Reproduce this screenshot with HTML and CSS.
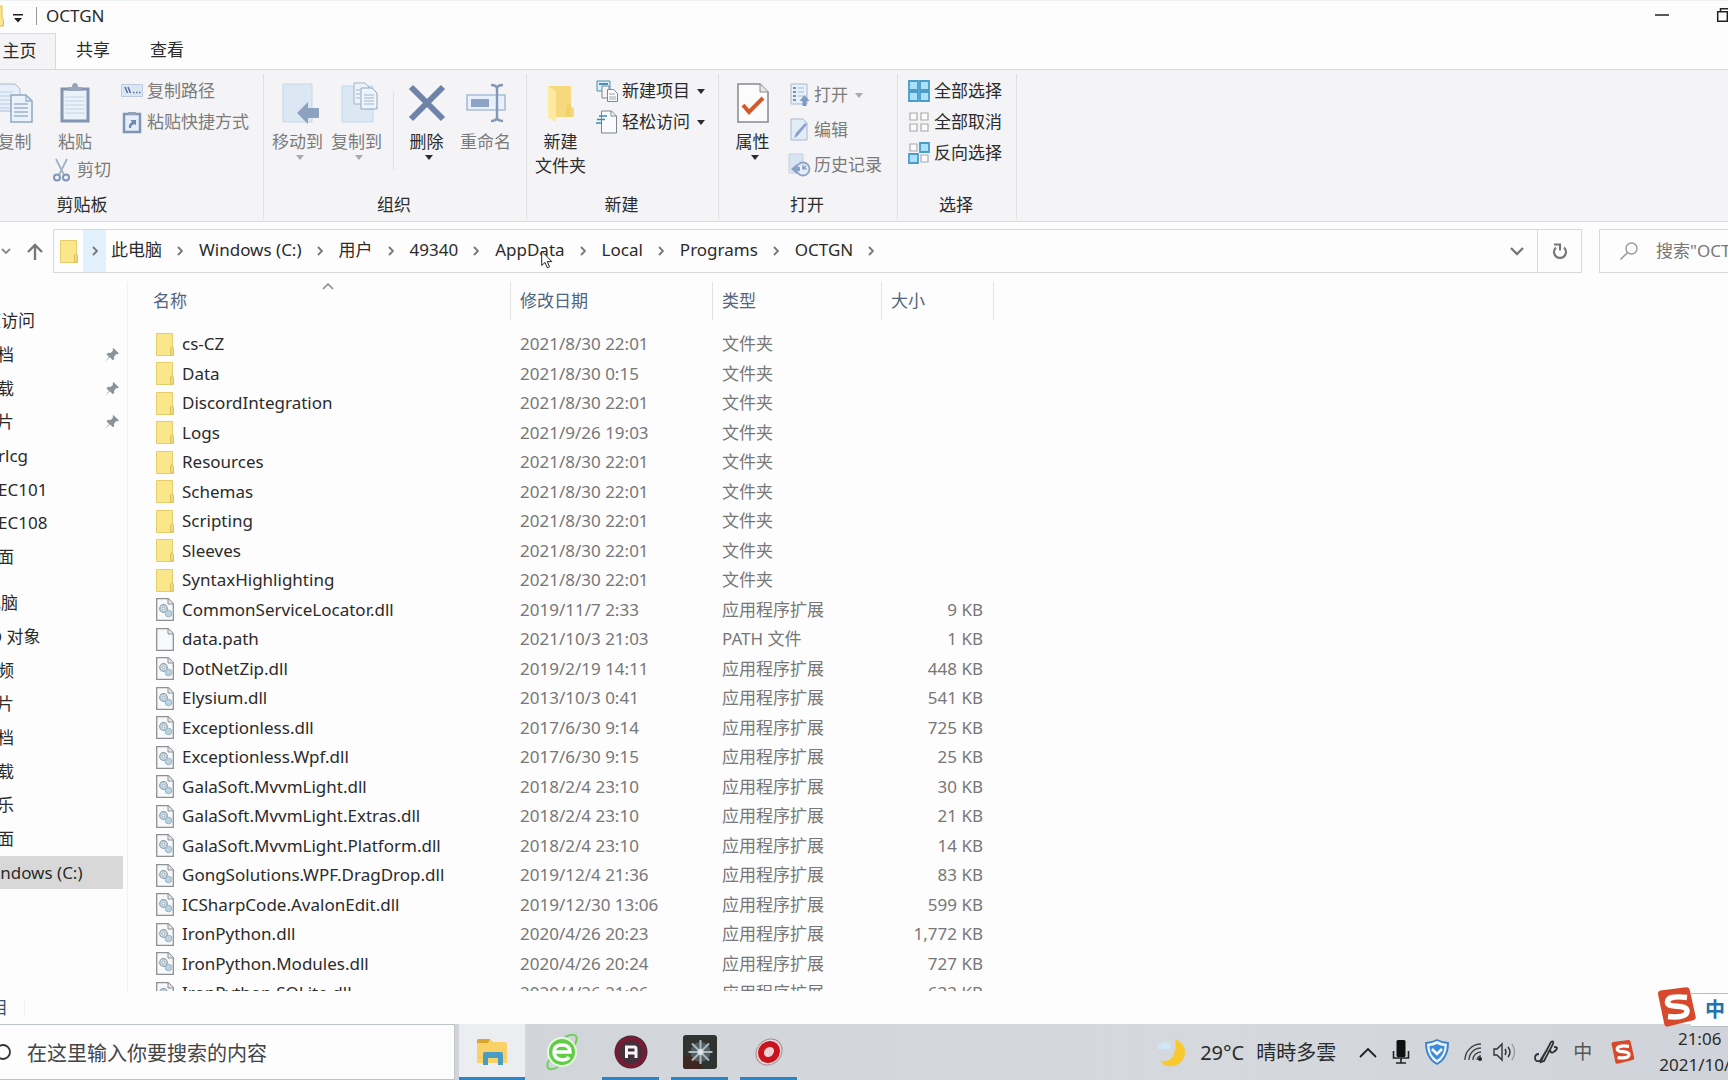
FILE: index.html
```html
<!DOCTYPE html>
<html lang="zh-CN">
<head>
<meta charset="utf-8">
<title>OCTGN</title>
<link rel="stylesheet" href="styles.css">
</head>
<body>
<svg class="sprite" aria-hidden="true">
  <symbol id="folder" viewBox="0 0 18 23"><path d="M.5.5h16v14l1 2v6H.5z" fill="#fae68b" stroke="#e6cd6c"/><path d="M14.500 22v-7l1.500-1.500 1.500 2V22z" fill="#f3d877" stroke="#dfc260"/></symbol>
  <symbol id="file" viewBox="0 0 18 23"><path d="M.7.7h11.600l5 5v16.600H.7z" fill="#f8f9fa" stroke="#8d9095" stroke-width="1.300"/><path d="M12 .7v5.300h5.300" fill="#e7e9eb" stroke="#8d9095"/></symbol>
  <symbol id="dll" viewBox="0 0 18 23"><use href="#file"/><circle cx="7.500" cy="10.500" r="3.800" fill="#d5e0e8" stroke="#8b9eac" stroke-width="1.200"/><circle cx="7.500" cy="10.500" r="1.500" fill="#f8f9fa" stroke="#8b9eac" stroke-width=".8"/><circle cx="12.500" cy="15.500" r="3.300" fill="#b9d3e2" stroke="#9ab4c5"/></symbol>
  <symbol id="pin" viewBox="0 0 14 14"><path d="M8.500 0L14 5.500l-1.500.8-1-.3-2.400 2.400.1 2.500-1.400 1.300-3-3L0 14l4-5-2.500-2.800L3 4.800l2.600.1L8 2.500 7.700 1z" fill="#8a949b"/></symbol>
  <symbol id="next" viewBox="0 0 6 10"><path d="M1 1l4 4-4 4" fill="none" stroke="#777" stroke-width="1.800"/></symbol>
  <symbol id="down" viewBox="0 0 8 5"><path d="M0 0h8L4 5z" fill="currentColor"/></symbol>
  <symbol id="sogou" viewBox="0 0 40 40"><path d="M1 7q-.5-3 2.500-3.500L29 .2q3-.4 3.700 2.500l6 27q.6 3-2.500 3.600L11 39.500q-3 .7-3.700-2.200z" fill="#d8492c"/><path d="M30 10.500Q10 8 10.500 15.500c.5 6.500 19.500 1 19.500 8.500 0 6-10 6.500-19 5.500" fill="none" stroke="#fff" stroke-width="5.500"/></symbol>
</svg>

<div class="window">
  <header class="titlebar">
    <svg class="app-icon" width="4" height="22" viewBox="0 0 4 22"><path d="M0 1h2v12l1.500 2v6H0" fill="#fae68b" stroke="#e0bf4f"/></svg>
    <button class="quick" aria-label="自定义快速访问工具栏"><svg width="10" height="9" viewBox="0 0 10 9"><path d="M0 0h10v1.600H0zM1 4h8L5 8.500z" fill="#222"/></svg></button>
    <h1>OCTGN</h1>
    <div class="window-buttons">
      <button aria-label="最小化"><svg width="14" height="14" viewBox="0 0 14 14"><path d="M0 7h14" stroke="#222" stroke-width="1.500"/></svg></button>
      <button aria-label="向下还原"><svg width="14" height="14" viewBox="0 0 14 14"><path d="M.7 3.700h9.600v9.600H.7zM3.500 3.500V.8h9.800v9.700h-3" fill="none" stroke="#222" stroke-width="1.500"/></svg></button>
    </div>
  </header>

  <nav class="tabs">
    <button class="tab active">主页</button>
    <button class="tab">共享</button>
    <button class="tab">查看</button>
  </nav>

  <div class="ribbon">
    <section class="group clipboard">
      <div class="tools">
        <button class="big dim copy"><svg width="40" height="40" viewBox="0 0 40 40"><path d="M1 1h19l5 5v22H1z" fill="#e7eff8" stroke="#a9bace"/><path d="M4 9h14M4 13h14M4 17h14M4 21h14M4 25h14" stroke="#b8cce2"/><path d="M16 12h15l6 6v21H16z" fill="#e9f1fa" stroke="#8fa6c1" stroke-width="1.500"/><path d="M31 12v6h6M19 21h14M19 25h14M19 29h14M19 33h14" fill="none" stroke="#9eb2cc" stroke-width="1.300"/></svg><span>复制</span></button>
        <div class="paste-stack">
          <button class="big dim"><svg width="30" height="40" viewBox="0 0 30 40"><path d="M2 6h26v32H2z" fill="#e9f1f9" stroke="#8194b2" stroke-width="3"/><path d="M8 8V4h4q0-4 3-4t3 4h4v4z" fill="#9aa6b8"/><path d="M5 14h20M5 18h20M5 22h20M5 26h20M5 30h20" stroke="#c3d4e7"/></svg><span>粘贴</span></button>
          <button class="small dim cut"><svg width="17" height="23" viewBox="0 0 17 23"><path d="M3 0l7.500 15M14 0L6.500 15" stroke="#9fb1ca" stroke-width="1.800"/><circle cx="4" cy="18.500" r="3" fill="none" stroke="#7d95bb" stroke-width="2"/><circle cx="13" cy="18.500" r="3" fill="none" stroke="#7d95bb" stroke-width="2"/></svg><span>剪切</span></button>
        </div>
        <div class="column">
          <button class="small dim"><svg width="22" height="22" viewBox="0 0 22 22"><path d="M.5 4.500h21v12H.5z" fill="#dbe6f3" stroke="#bccbe0"/><path d="M4 7l2.500 6M7 7l2.500 6M12 12.500h1.500M15 12.500h1.500M18 12.500h1.500" stroke="#58719a" stroke-width="1.500"/></svg><span>复制路径</span></button>
          <button class="small dim"><svg width="22" height="22" viewBox="0 0 22 22"><path d="M3 3h16v18H3z" fill="#e4eef9" stroke="#7f95b8" stroke-width="2.500"/><path d="M7 4V1h8v3z" fill="#93a3ba"/><path d="M8 17q-1-4 3-6L9.500 9H15v5.500L13.500 13Q10 14 10 17z" fill="#6c89b6"/></svg><span>粘贴快捷方式</span></button>
        </div>
      </div>
      <h2>剪贴板</h2>
    </section>

    <section class="group organize">
      <div class="tools">
        <button class="big dim"><svg width="38" height="40" viewBox="-3 0 38 40"><path d="M1 1h29v38H1z" fill="#dbe7f3" stroke="#c6d7e8"/><path d="M15 30L26 19v6h11v10H26v6z" fill="#8da1c0"/></svg><span>移动到</span><svg class="caret" width="8" height="5"><use href="#down"/></svg></button>
        <button class="big dim"><svg width="38" height="40" viewBox="-3 0 38 40"><path d="M1 3h31v36H1z" fill="#dbe7f3" stroke="#c6d7e8"/><path d="M13 0h11l4 4v17H13z" fill="#eaf2fa" stroke="#9fb3cc"/><path d="M20 5h11l5 5v16H20z" fill="#eef4fb" stroke="#8ea4c1"/><path d="M23 12h10M23 15h10M23 18h10M23 21h10M15 7h4M15 11h4M15 15h4" stroke="#9fb3cc"/></svg><span>复制到</span><svg class="caret" width="8" height="5"><use href="#down"/></svg></button>
        <span class="rule"></span>
        <button class="big delete"><svg width="38" height="40" viewBox="0 0 38 40"><path d="M3 4l32 32M35 4L3 36" stroke="#6f83a8" stroke-width="6"/></svg><span>删除</span><svg class="caret" width="8" height="5"><use href="#down"/></svg></button>
        <button class="big dim"><svg width="40" height="40" viewBox="0 0 40 40"><path d="M1 12h38v15H1z" fill="#e8f1fb" stroke="#a7bcd7" stroke-width="1.600"/><path d="M5 16h18v8H5z" fill="#8da4c8"/><path d="M25 2q6 0 6 4v28q0 4-6 4M37 2q-6 0-6 4v28q0 4 6 4" fill="none" stroke="#8497b5" stroke-width="2.400"/></svg><span>重命名</span></button>
      </div>
      <h2>组织</h2>
    </section>

    <section class="group create">
      <div class="tools">
        <button class="big"><svg width="30" height="40" viewBox="0 0 30 40"><path d="M2 3h23v20l3 3v8H8z" fill="#f6d97c"/><path d="M2 3l8 5v31l-8-4z" fill="#fde9a2"/><path d="M20 23l5-3v14h-5z" fill="#eecb62" opacity=".6"/></svg><span>新建<br>文件夹</span></button>
        <div class="column">
          <button class="small"><svg width="22" height="22" viewBox="0 0 22 22"><path d="M1 1h13v10H1z" fill="#dceff8" stroke="#4c8fae"/><path d="M3 4h9" stroke="#4c8fae" stroke-width="2"/><path d="M6 6h7v12H6z" fill="#f4f5f7" stroke="#7b8794"/><path d="M11.500 9.500h6l4 4v8h-10z" fill="#fff" stroke="#7b8794"/><path d="M13 14h6M13 17h7M13 19h7" stroke="#93a7bc"/></svg><span>新建项目</span><svg class="caret" width="8" height="5"><use href="#down"/></svg></button>
          <button class="small"><svg width="22" height="24" viewBox="0 0 22 24"><path d="M5.500 1h10l5 5v17h-15z" fill="#fafbfc" stroke="#7c848e"/><path d="M15 1v5h5" fill="none" stroke="#7c848e"/><path d="M3 6h8M1 9.500h8M0 13h6" stroke="#3e86bd" stroke-width="1.600"/></svg><span>轻松访问</span><svg class="caret" width="8" height="5"><use href="#down"/></svg></button>
        </div>
      </div>
      <h2>新建</h2>
    </section>

    <section class="group open">
      <div class="tools">
        <button class="big"><svg width="32" height="40" viewBox="0 0 32 40"><path d="M1 1h22l8 8v30H1z" fill="#fcfcfd" stroke="#85898e" stroke-width="1.500"/><path d="M23 1v8h8" fill="#e5e7e9" stroke="#85898e"/><path d="M6 22l6 7L26 15" fill="none" stroke="#d4592b" stroke-width="4"/></svg><span>属性</span><svg class="caret" width="8" height="5"><use href="#down"/></svg></button>
        <div class="column spaced">
          <button class="small dim"><svg width="22" height="24" viewBox="0 0 22 24"><path d="M3 1h16v20H3z" fill="#e8f0fa" stroke="#a6b8d1"/><path d="M5 5h3M5 9h3M5 13h3M5 17h3" stroke="#7391bd" stroke-width="2"/><path d="M10 5h6M10 9h6M10 13h5" stroke="#a6b8d1"/><path d="M16.500 12l5 6h-3v5h-4v-5h-3z" fill="#7e99c1"/></svg><span>打开</span><svg class="caret" width="8" height="5"><use href="#down"/></svg></button>
          <button class="small dim"><svg width="22" height="24" viewBox="0 0 22 24"><path d="M3 1h12l4 4v17H3z" fill="#e3edf8" stroke="#a6b8d1"/><path d="M6 20l2-5L17 5l2 1.500L9.500 18z" fill="#8ba3c6"/></svg><span>编辑</span></button>
          <button class="small dim"><svg width="22" height="24" viewBox="0 0 22 24"><path d="M1 1h14v19H1z" fill="#d8e4f1" stroke="#c1d0e2"/><circle cx="15" cy="16" r="6.500" fill="#e5edf8" stroke="#91a5c4" stroke-width="1.800"/><path d="M15 16l3-3M15 12v4h4" fill="none" stroke="#7a91b5" stroke-width="1.200"/><path d="M3 16l6-5v3h3v4H9v3z" fill="#8aa0c4"/></svg><span>历史记录</span></button>
        </div>
      </div>
      <h2>打开</h2>
    </section>

    <section class="group select">
      <div class="tools">
        <div class="column">
          <button class="small"><svg width="22" height="22" viewBox="0 0 22 22"><path d="M1 1h9v9H1zM12 1h9v9h-9zM1 12h9v9H1zM12 12h9v9h-9z" fill="#a9e0fa" stroke="#4b9cc7" stroke-width="1.800"/></svg><span>全部选择</span></button>
          <button class="small"><svg width="22" height="22" viewBox="0 0 22 22"><path d="M2 2h7v7H2zM13 2h7v7h-7zM2 13h7v7H2zM13 13h7v7h-7z" fill="#fbfbfb" stroke="#aaa" stroke-width="1.200"/></svg><span>全部取消</span></button>
          <button class="small"><svg width="22" height="22" viewBox="0 0 22 22"><path d="M2 2h7v7H2zM13 13h7v7h-7z" fill="#fbfbfb" stroke="#aaa" stroke-width="1.200"/><path d="M12 1h9v9h-9zM1 12h9v9H1z" fill="#a9e0fa" stroke="#4b9cc7" stroke-width="1.800"/></svg><span>反向选择</span></button>
        </div>
      </div>
      <h2>选择</h2>
    </section>
  </div>

  <div class="navbar">
    <button class="recent" aria-label="最近浏览的位置"><svg width="8" height="6" viewBox="0 0 8 6"><path d="M0 1l4 4 4-4" fill="none" stroke="#888" stroke-width="1.800"/></svg></button>
    <button class="up" aria-label="向上"><svg width="16" height="17" viewBox="0 0 16 17"><path d="M8 17V2M1 9l7-7 7 7" fill="none" stroke="#777" stroke-width="2.400"/></svg></button>
    <div class="address">
      <svg class="address-icon" width="18" height="23"><use href="#folder"/></svg>
      <button class="step hot" aria-label="展开"><svg width="6" height="10"><use href="#next"/></svg></button>
      <a href="#">此电脑</a><svg class="sep" width="6" height="10"><use href="#next"/></svg>
      <a href="#">Windows (C:)</a><svg class="sep" width="6" height="10"><use href="#next"/></svg>
      <a href="#">用户</a><svg class="sep" width="6" height="10"><use href="#next"/></svg>
      <a href="#">49340</a><svg class="sep" width="6" height="10"><use href="#next"/></svg>
      <a href="#" class="pointed">AppData<svg class="cursor" width="12" height="19" viewBox="0 0 12 19"><path d="M.7 1v14.500l3.300-3 2.300 5.300 2.200-1-2.200-5.200h4.500z" fill="#fff" stroke="#222"/></svg></a><svg class="sep" width="6" height="10"><use href="#next"/></svg>
      <a href="#">Local</a><svg class="sep" width="6" height="10"><use href="#next"/></svg>
      <a href="#">Programs</a><svg class="sep" width="6" height="10"><use href="#next"/></svg>
      <a href="#">OCTGN</a><svg class="sep" width="6" height="10"><use href="#next"/></svg>
      <button class="history" aria-label="以前的位置"><svg width="14" height="9" viewBox="0 0 14 9"><path d="M1 1l6 6 6-6" fill="none" stroke="#777" stroke-width="2.400"/></svg></button>
      <button class="refresh" aria-label="刷新"><svg width="16" height="17" viewBox="0 0 16 17"><path d="M12 4.500A6 6 0 1 1 4 4.500" fill="none" stroke="#777" stroke-width="2.200"/><path d="M2 1.500h6v6" fill="none" stroke="#777" stroke-width="2.200"/></svg></button>
    </div>
    <label class="search"><svg width="18" height="18" viewBox="0 0 18 18"><circle cx="11.500" cy="6.500" r="5.500" fill="none" stroke="#999" stroke-width="1.400"/><path d="M7.500 10.500L.5 17.500" stroke="#999" stroke-width="1.600"/></svg><input type="text" placeholder="搜索&quot;OCTGN&quot;" aria-label="搜索"></label>
  </div>

  <main class="content">
    <aside class="sidebar">
      <ul>
        <li class="root">快速访问</li>
        <li>文档<svg class="pin" width="14" height="14"><use href="#pin"/></svg></li>
        <li>下载<svg class="pin" width="14" height="14"><use href="#pin"/></svg></li>
        <li>图片<svg class="pin" width="14" height="14"><use href="#pin"/></svg></li>
        <li class="latin">rlcg</li>
        <li class="latin">EC101</li>
        <li class="latin">EC108</li>
        <li>桌面</li>
      </ul>
      <ul>
        <li class="root">此电脑</li>
        <li>3D 对象</li>
        <li>视频</li>
        <li>图片</li>
        <li>文档</li>
        <li>下载</li>
        <li>音乐</li>
        <li>桌面</li>
        <li class="selected">Windows (C:)</li>
      </ul>
    </aside>
    <div class="files">
      <table>
        <colgroup><col class="c-name"><col class="c-date"><col class="c-type"><col class="c-size"></colgroup>
        <thead><tr>
          <th><button class="sorted">名称<svg width="12" height="7" viewBox="0 0 12 7"><path d="M1 6l5-5 5 5" fill="none" stroke="#888" stroke-width="1.500"/></svg></button></th>
          <th><button>修改日期</button></th>
          <th><button>类型</button></th>
          <th><button>大小</button></th>
        </tr></thead>
        <tbody>
          <tr><td><svg><use href="#folder"/></svg>cs-CZ</td><td>2021/8/30 22:01</td><td>文件夹</td><td></td></tr>
          <tr><td><svg><use href="#folder"/></svg>Data</td><td>2021/8/30 0:15</td><td>文件夹</td><td></td></tr>
          <tr><td><svg><use href="#folder"/></svg>DiscordIntegration</td><td>2021/8/30 22:01</td><td>文件夹</td><td></td></tr>
          <tr><td><svg><use href="#folder"/></svg>Logs</td><td>2021/9/26 19:03</td><td>文件夹</td><td></td></tr>
          <tr><td><svg><use href="#folder"/></svg>Resources</td><td>2021/8/30 22:01</td><td>文件夹</td><td></td></tr>
          <tr><td><svg><use href="#folder"/></svg>Schemas</td><td>2021/8/30 22:01</td><td>文件夹</td><td></td></tr>
          <tr><td><svg><use href="#folder"/></svg>Scripting</td><td>2021/8/30 22:01</td><td>文件夹</td><td></td></tr>
          <tr><td><svg><use href="#folder"/></svg>Sleeves</td><td>2021/8/30 22:01</td><td>文件夹</td><td></td></tr>
          <tr><td><svg><use href="#folder"/></svg>SyntaxHighlighting</td><td>2021/8/30 22:01</td><td>文件夹</td><td></td></tr>
          <tr><td><svg><use href="#dll"/></svg>CommonServiceLocator.dll</td><td>2019/11/7 2:33</td><td>应用程序扩展</td><td>9 KB</td></tr>
          <tr><td><svg><use href="#file"/></svg>data.path</td><td>2021/10/3 21:03</td><td>PATH 文件</td><td>1 KB</td></tr>
          <tr><td><svg><use href="#dll"/></svg>DotNetZip.dll</td><td>2019/2/19 14:11</td><td>应用程序扩展</td><td>448 KB</td></tr>
          <tr><td><svg><use href="#dll"/></svg>Elysium.dll</td><td>2013/10/3 0:41</td><td>应用程序扩展</td><td>541 KB</td></tr>
          <tr><td><svg><use href="#dll"/></svg>Exceptionless.dll</td><td>2017/6/30 9:14</td><td>应用程序扩展</td><td>725 KB</td></tr>
          <tr><td><svg><use href="#dll"/></svg>Exceptionless.Wpf.dll</td><td>2017/6/30 9:15</td><td>应用程序扩展</td><td>25 KB</td></tr>
          <tr><td><svg><use href="#dll"/></svg>GalaSoft.MvvmLight.dll</td><td>2018/2/4 23:10</td><td>应用程序扩展</td><td>30 KB</td></tr>
          <tr><td><svg><use href="#dll"/></svg>GalaSoft.MvvmLight.Extras.dll</td><td>2018/2/4 23:10</td><td>应用程序扩展</td><td>21 KB</td></tr>
          <tr><td><svg><use href="#dll"/></svg>GalaSoft.MvvmLight.Platform.dll</td><td>2018/2/4 23:10</td><td>应用程序扩展</td><td>14 KB</td></tr>
          <tr><td><svg><use href="#dll"/></svg>GongSolutions.WPF.DragDrop.dll</td><td>2019/12/4 21:36</td><td>应用程序扩展</td><td>83 KB</td></tr>
          <tr><td><svg><use href="#dll"/></svg>ICSharpCode.AvalonEdit.dll</td><td>2019/12/30 13:06</td><td>应用程序扩展</td><td>599 KB</td></tr>
          <tr><td><svg><use href="#dll"/></svg>IronPython.dll</td><td>2020/4/26 20:23</td><td>应用程序扩展</td><td>1,772 KB</td></tr>
          <tr><td><svg><use href="#dll"/></svg>IronPython.Modules.dll</td><td>2020/4/26 20:24</td><td>应用程序扩展</td><td>727 KB</td></tr>
          <tr><td><svg><use href="#dll"/></svg>IronPython.SQLite.dll</td><td>2020/4/26 21:06</td><td>应用程序扩展</td><td>633 KB</td></tr>
        </tbody>
      </table>
    </div>
  </main>

  <footer class="status"><span>目</span></footer>
</div>

<div class="taskbar">
  <label class="task-search"><svg width="12" height="18" viewBox="0 0 12 18"><circle cx="3" cy="7" r="7" fill="none" stroke="#333" stroke-width="1.800"/></svg><input type="text" placeholder="在这里输入你要搜索的内容" aria-label="搜索"></label>
  <button class="app current" aria-label="文件资源管理器"><svg width="32" height="28" viewBox="0 0 32 28"><path d="M1 3q0-2 2-2h11l3 3h12q2 0 2 2v19H1z" fill="#f8d266"/><path d="M1 3q0-2 2-2h11l-2 4H1z" fill="#d8a52f"/><path d="M7 16q0-2 2-2h16q2 0 2 2v11h-5v-7H12v7H7z" fill="#4a9cc4"/></svg></button>
  <button class="app idle" aria-label="浏览器"><svg width="34" height="36" viewBox="0 0 34 36"><path d="M20 3Q28-1 31 2q2 4-2 10M13 33Q6 37 3 34q-2-4 2-9" fill="none" stroke="#6fd15a" stroke-width="2"/><circle cx="17" cy="18" r="14" fill="#5fce45" stroke="#e6f8df" stroke-width="2"/><path d="M9 18h16q0-7-8-7t-8 7 8 8q5 0 7-3" fill="none" stroke="#fff" stroke-width="3.500"/></svg></button>
  <button class="app open-app" aria-label="ArkhamDB"><svg width="34" height="34" viewBox="0 0 34 34"><circle cx="17" cy="17" r="16.500" fill="#3f2f38"/><circle cx="17" cy="17" r="13.500" fill="#43303a" stroke="#7c1a34" stroke-width="4"/><path d="M12.500 23V12h8q1.500 0 1.500 2v9M12 18h10" fill="none" stroke="#f4f4f4" stroke-width="3"/></svg></button>
  <button class="app open-app" aria-label="游戏"><svg width="34" height="34" viewBox="0 0 34 34"><rect width="34" height="34" rx="3" fill="#30332f"/><path d="M0 22l17-2 2 14H3q-3 0-3-3z" fill="#3f2721"/><circle cx="17.500" cy="17" r="10" fill="#71828a" opacity=".55"/><path d="M17.500 5v24M5.500 17h24M9 8.500l17 17M26 8.500l-17 17" stroke="#a9bac2" stroke-width="2"/><circle cx="17.500" cy="17" r="3" fill="#d8e2e7"/></svg></button>
  <button class="app open-app" aria-label="录屏"><svg width="30" height="30" viewBox="0 0 30 30"><ellipse cx="15" cy="15" rx="14" ry="12" transform="rotate(-45 15 15)" fill="#e4d9dc" stroke="#a9898e"/><ellipse cx="15" cy="15" rx="8.500" ry="7.500" transform="rotate(-45 15 15)" fill="#ead3d7" stroke="#c9141d" stroke-width="6"/></svg></button>

  <div class="tray">
    <button class="weather"><svg width="30" height="30" viewBox="0 0 30 30"><path d="M19 1c10 4 13 14 7 22-6 7-17 7-22 0 6 1 12-1 14-7 2-5 2-10 1-15z" fill="#f9c92c"/><path d="M2 11q-2-4 3-5 3-5 7-1 4 0 2 6z" fill="#cfe8f5"/></svg><span class="temp">29°C</span><span class="sky">晴時多雲</span></button>
    <button aria-label="显示隐藏的图标"><svg width="18" height="11" viewBox="0 0 18 11"><path d="M1 10l8-8 8 8" fill="none" stroke="#222" stroke-width="1.800"/></svg></button>
    <button aria-label="麦克风"><svg width="18" height="24" viewBox="0 0 18 24"><rect x="4.500" y="0" width="9" height="17" rx="1.500" fill="#111"/><path d="M1.500 11v7h15v-7M9 18v5M4 23h10" fill="none" stroke="#222" stroke-width="1.600"/></svg></button>
    <button aria-label="安全"><svg width="24" height="26" viewBox="0 0 24 26"><path d="M12 1q6 3 11 3 0 15-11 21Q1 19 1 4q5 0 11-3z" fill="#e8f2fc" stroke="#3a80cc" stroke-width="1.800"/><path d="M4.500 7q4 0 7.500-2 3.500 2 7.500 2 0 9-7.500 14Q4.500 16 4.500 7z" fill="#3d8bdb"/><path d="M7 10l5 5 5-5" fill="none" stroke="#fff" stroke-width="2.500"/></svg></button>
    <button aria-label="网络"><svg width="18" height="18" viewBox="0 0 18 18"><path d="M1 17A16 16 0 0 1 17 1M5 17A12 12 0 0 1 17 5M9 17a8 8 0 0 1 8-8M13 17a4 4 0 0 1 4-4" fill="none" stroke="#444" stroke-width="1.400"/><circle cx="16" cy="16" r="2" fill="#222"/></svg></button>
    <button class="volume" aria-label="音量"><svg width="24" height="18" viewBox="0 0 24 18"><path d="M1 6h3l5-5v16l-5-5H1z" fill="none" stroke="#333" stroke-width="1.400"/><path d="M12 6q2 3 0 6M15 4q4 5 0 10" fill="none" stroke="#333" stroke-width="1.500"/><path d="M19 1q5 8 0 16" fill="none" stroke="#999" stroke-width="1.300"/></svg></button>
    <button aria-label="墨迹"><svg width="24" height="24" viewBox="0 0 24 24"><path d="M5 14q-4 0-4 4t5 3l8-13M9 17l8-15q3-2 2 2l-9 17-3 1zM14 12q2-2 3 0t5-2q3-3-2-3" fill="none" stroke="#333" stroke-width="1.800"/></svg></button>
    <button class="ime-mode">中</button>
    <button aria-label="输入法"><svg width="24" height="26"><use href="#sogou"/></svg></button>
    <div class="clock"><time>21:06</time><time>2021/10/3</time></div>
  </div>
</div>

<div class="ime"><svg width="40" height="40"><use href="#sogou"/></svg><button>中</button></div>
</body>
</html>
```
FILE: styles.css
```css
* { box-sizing: border-box; }

html, body { height: 100%; }

body {
  margin: 0;
  display: flex;
  flex-direction: column;
  overflow: hidden;
  background: #fdfdfd;
  color: #2b2b2b;
  font: 17px/24px "Noto Sans", "Noto Sans CJK SC", sans-serif;
}

button {
  margin: 0;
  padding: 0;
  border: 0;
  background: none;
  color: inherit;
  font: inherit;
}

input {
  min-width: 0;
  padding: 0;
  border: 0;
  outline: 0;
  background: none;
  color: inherit;
  font: inherit;
}

ul { margin: 0; padding: 0; list-style: none; }
h1, h2 { margin: 0; font-size: inherit; font-weight: 400; }
a { color: inherit; text-decoration: none; }
svg { display: block; flex: none; overflow: visible; }
.sprite { position: absolute; width: 0; height: 0; }

.window {
  flex: 1;
  min-height: 0;
  display: flex;
  flex-direction: column;
}

/* Title bar */
.titlebar {
  flex: none;
  display: flex;
  align-items: center;
  height: 33px;
  padding-bottom: 2px;
  border-top: 1px solid #eef2f4;
}
.quick { padding: 4px 13px 0 9px; }
.titlebar h1 {
  padding-left: 9px;
  line-height: 18px;
  border-left: 1px solid #999;
}
.window-buttons {
  display: flex;
  gap: 48px;
  margin: 0 -3px 2px auto;
}

/* Ribbon */
.tabs { flex: none; display: flex; height: 36px; }
.tab { width: 74px; padding-bottom: 2px; white-space: nowrap; }
.tab.active {
  width: 56px;
  padding-right: 16px;
  background: #f4f4f6;
  border: solid #d9dadc;
  border-width: 1px 1px 0 0;
}

.ribbon {
  flex: none;
  display: flex;
  height: 153px;
  padding: 4px 0 2px;
  background: #f4f4f6;
  border-top: 1px solid #d9dadc;
  border-bottom: 1px solid #d9dadc;
}
.group {
  display: flex;
  flex-direction: column;
  border-right: 1px solid #dfe0e3;
}
.group h2 { margin-top: auto; padding: 0 2px 2px 0; text-align: center; }
.tools { display: flex; padding-top: 9px; }
.clipboard { width: 361px; margin-left: -97px; }
.clipboard .tools { justify-content: flex-end; padding-right: 14px; }
.organize { width: 263px; }
.create { width: 192px; }
.open { width: 179px; }
.select { width: 119px; }

.big {
  display: flex;
  flex-direction: column;
  align-items: center;
  width: 59px;
  line-height: 24px;
}
.big span { margin-top: 7px; }
.big .caret { margin: 1px 0 0 4px; }
.small { display: flex; align-items: center; height: 24px; gap: 4px; white-space: nowrap; }
.small .caret { margin-left: 3px; }
.dim { color: #7b7b7b; }
.dim .caret { color: #aaa; }

.copy { margin-right: 5px; }
.paste-stack { width: 72px; }
.paste-stack .big { width: 52px; }
.cut { margin: 4px 0 0 4px; gap: 7px; }

.column { display: flex; flex-direction: column; gap: 7px; margin-top: -4px; }
.column.spaced { gap: 11px; margin-top: 0; }
.organize .tools { padding-left: 4px; }
.organize .rule { width: 1px; height: 78px; margin: 9px 3px 0 7px; background: #dfe0e3; }
.delete { color: #2b2b2b; }
.create .tools { padding-left: 4px; gap: 6px; }
.open .tools { padding-left: 4px; gap: 6px; }
.select .tools { padding-left: 10px; }

/* Address bar */
.navbar { flex: none; display: flex; height: 51px; padding-top: 7px; }
.navbar button { display: flex; align-items: center; justify-content: center; }
.recent { width: 11px; }
.up { width: 42px; padding-left: 5px; }
.address {
  flex: 1;
  min-width: 0;
  display: flex;
  align-items: center;
  border: 1px solid #d9d9d9;
}
.address > * { flex: none; }
.address-icon { margin: 0 5px 0 6px; }
.step { width: 23px; align-self: stretch; }
.step.hot { background: #e2f0fb; }
.address a { margin: 0 15px 2px 5px; }
.address .sep { margin-right: 11px; }
.address .pointed { position: relative; }
.cursor { position: absolute; left: 46px; top: 12px; }
.history { width: 40px; margin-left: auto; }
.refresh { width: 44px; align-self: stretch; border-left: 1px solid #d9d9d9; }
.search {
  display: flex;
  align-items: center;
  width: 129px;
  margin-left: 17px;
  padding-left: 20px;
  gap: 18px;
  border: solid #d9d9d9;
  border-width: 1px 0 1px 1px;
}
.search input { flex: 1; }
.search input::placeholder { color: #777; opacity: 1; }

/* Folder contents */
.content { flex: 1; min-height: 0; display: flex; overflow: hidden; }
.sidebar {
  flex: none;
  width: 128px;
  margin-top: 9px;
  padding: 22px 4px 0 0;
  overflow: hidden;
  border-right: 1px solid #f0f1f2;
}
.sidebar ul + ul { margin-top: 12px; }
.sidebar li {
  display: flex;
  align-items: center;
  justify-content: space-between;
  height: 34px;
  padding-right: 4px;
  text-indent: -20px;
  white-space: nowrap;
}
.sidebar li:nth-child(3n) { height: 33px; }
.sidebar .root { text-indent: -33px; }
.sidebar .latin { text-indent: -2px; }
.sidebar .selected { height: 34px; background: #d8d8d8; }

.files { flex: 1; min-width: 0; overflow: hidden; }
table { width: 866px; table-layout: fixed; border-collapse: collapse; }
.c-name { width: 383px; }
.c-date { width: 202px; }
.c-type { width: 169px; }
.c-size { width: 112px; }
th { height: 56px; padding: 9px 0 0; vertical-align: top; font-weight: 400; color: #52647e; }
th button { position: relative; display: block; width: 100%; height: 38px; padding-left: 9px; text-align: left; border-right: 1px solid #e2e3e5; }
th .sorted { padding-left: 25px; }
.sorted svg { position: absolute; left: 194px; top: 1px; }
td { height: 30px; padding: 0 0 0 9px; color: #777; line-height: 24px; white-space: nowrap; }
tbody tr:nth-child(even) td { height: 29px; }
td:first-child { display: flex; align-items: center; gap: 8px; padding-left: 28px; color: #2b2b2b; }
td:first-child svg { width: 18px; height: 23px; }
td:last-child { padding-right: 11px; text-align: right; }

.status { flex: none; height: 33px; display: flex; align-items: center; color: #35536f; }
.status span { width: 25px; height: 18px; line-height: 18px; text-indent: -9px; border-right: 1px solid #f0f1f2; }

/* Taskbar */
.taskbar {
  flex: none;
  display: flex;
  height: 56px;
  background: linear-gradient(90deg, #cfd3d8, #d5d8dd 70%, #d0d4da);
}
.task-search {
  display: flex;
  align-items: center;
  width: 455px;
  gap: 15px;
  margin-right: 4px;
  padding-top: 3px;
  background: #fdfdfd;
  border: solid #bfc4ca;
  border-width: 1px 1px 1px 0;
  font-size: 20px;
}
.task-search input { flex: 1; }
.task-search input::placeholder { color: #444; opacity: 1; }
.app {
  display: flex;
  align-items: center;
  justify-content: center;
  width: 57px;
  margin-right: 12px;
  padding-top: 2px;
  border-bottom: 3px solid transparent;
}
.app.current { width: 66px; margin-right: 8px; background: #ecedf1; border-color: #2d85c3; }
.app.open-app { border-color: #2d85c3; }

.tray {
  display: flex;
  align-items: center;
  gap: 15px;
  margin: 0 -12px 0 auto;
}
.weather { display: flex; align-items: center; margin-right: 8px; padding-top: 2px; font-size: 20px; }
.temp { margin: 0 12px 0 14px; }
.volume { margin: 0 2px 0 -4px; }
.ime-mode { margin-right: 4px; color: #555; font-size: 19px; }
.clock { display: flex; flex-direction: column; gap: 2px; margin-left: 9px; text-align: center; }

/* Floating input-method bar */
.ime { position: absolute; right: 0; bottom: 53px; display: flex; align-items: flex-end; width: 71px; }
.ime svg { position: relative; z-index: 1; }
.ime button {
  flex: 1;
  height: 34px;
  margin-left: -6px;
  padding-left: 11px;
  background: #fdfdfd;
  border: solid #b9bcc0;
  border-width: 1px 0;
  color: #2173b0;
  font-size: 20px;
  font-weight: 700;
}
```
